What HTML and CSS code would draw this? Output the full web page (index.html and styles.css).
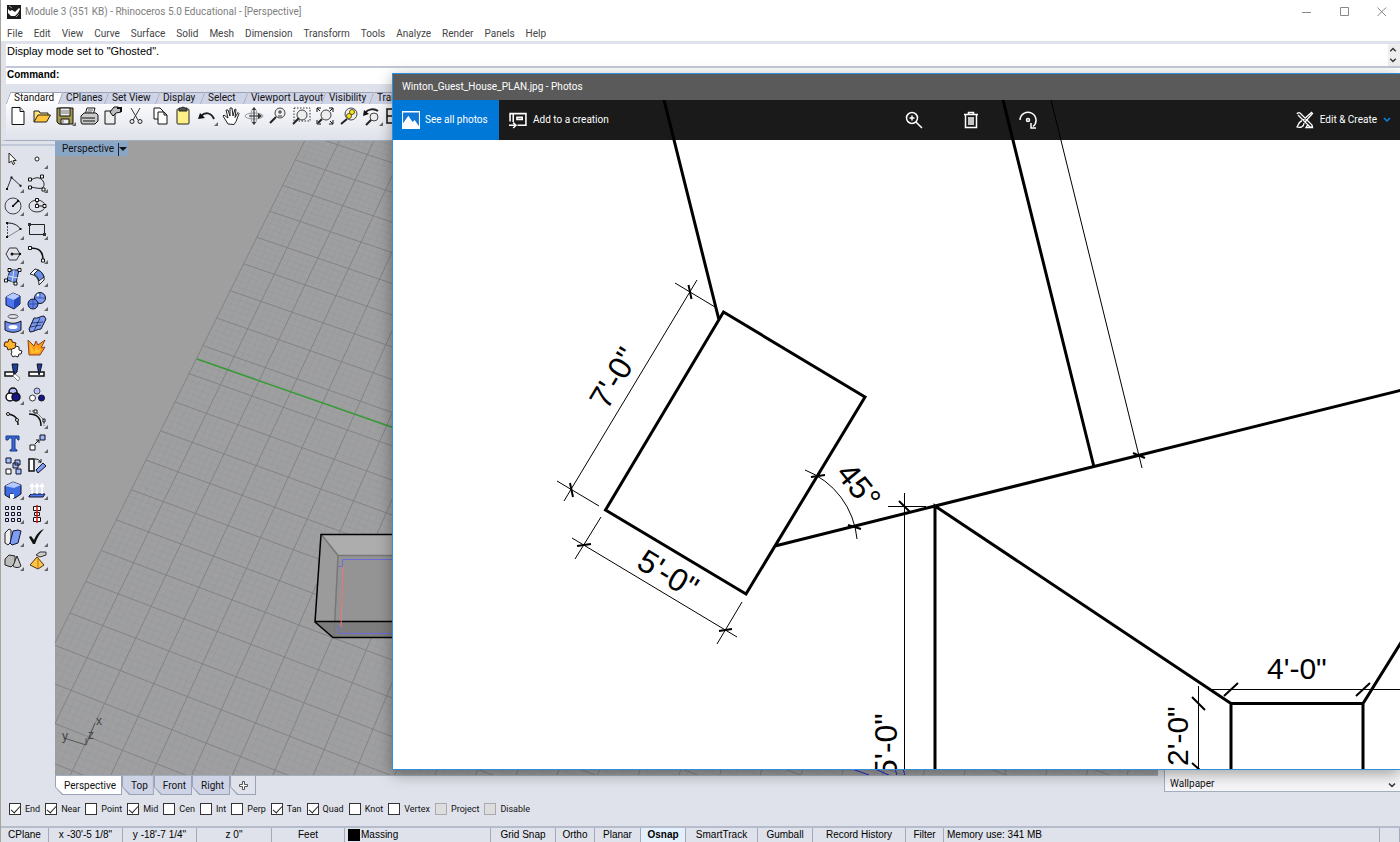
FILE: index.html
```html
<!DOCTYPE html>
<html lang="en">
<head>
<meta charset="utf-8">
<title>Module 3 - Rhinoceros 5.0 Educational</title>
<link rel="stylesheet" href="styles.css">
</head>
<body>
<div class="app">
  <header class="titlebar">
    <svg class="app-icon" viewBox="0 0 14 14"><rect width="14" height="14" fill="#1c1c1c"/><path d="M1 4l2 2 2-1 3 2 4-4 1 1-2 4-3 3-4 0-3-3z" fill="#fff"/><path d="M2 1l3 2M9 12l3-3" stroke="#999"/></svg>
    <h1 class="title">Module 3 (351 KB) - Rhinoceros 5.0 Educational - [Perspective]</h1>
    <div class="win-buttons">
      <button aria-label="Minimize"><svg viewBox="0 0 10 10"><path d="M0 5.500h9"/></svg></button>
      <button aria-label="Maximize"><svg viewBox="0 0 10 10"><path d="M.5.5h8v8h-8z"/></svg></button>
      <button aria-label="Close"><svg viewBox="0 0 10 10"><path d="M.5.5l8.500 8.500M9 .5L.5 9"/></svg></button>
    </div>
  </header>
  <nav class="menubar">
    <button>File</button><button>Edit</button><button>View</button><button>Curve</button><button>Surface</button><button>Solid</button><button>Mesh</button><button>Dimension</button><button>Transform</button><button>Tools</button><button>Analyze</button><button>Render</button><button>Panels</button><button>Help</button>
  </nav>
  <section class="command">
    <div class="history"><p>Display mode set to "Ghosted".</p>
      <div class="scroll"><svg viewBox="0 0 10 24"><path d="M2 8l3-3 3 3M2 16l3 3 3-3"/></svg></div>
    </div>
    <div class="prompt"><label for="cmd">Command:</label><input id="cmd" type="text"></div>
  </section>
  <section class="toolbar">
    <div class="tabs">
      <button class="tab on t52">Standard</button><button class="tab t46">CPlanes</button><button class="tab t51">Set View</button><button class="tab t45">Display</button><button class="tab t43">Select</button><button class="tab t78">Viewport Layout</button><button class="tab t48">Visibility</button><button class="tab t52">Transform</button>
    </div>
    <div class="icons">
      <button class="tool" aria-label="New"><svg viewBox="-11 -10 22 20"><path d="M-6-8.500h8l4 4v13h-12z" fill="#fff" stroke="#111"/><path d="M2-8.500v4h4" fill="#ddd" stroke="#111"/></svg></button>
      <button class="tool" aria-label="Open"><svg viewBox="-11 -10 22 20"><path d="M-8 6v-11h5l1 2h8v3" fill="#ffe27a" stroke="#222"/><path d="M-8 6l4-7h12.500l-4 7z" fill="#ffc63b" stroke="#222"/></svg></button>
      <button class="tool more" aria-label="Save"><svg viewBox="-11 -10 22 20"><path d="M-8-8h16v16h-14l-2-2z" fill="#a5974c" stroke="#111"/><path d="M-5-8h10v8h-10zM-4 3h8v5h-8z" fill="#eee" stroke="#111"/><path d="M-4-5h8M-4-3h8M-2 3v5" stroke="#777"/></svg></button>
      <button class="tool" aria-label="Print"><svg viewBox="-11 -10 22 20"><path d="M-4-1l2-7h8l-2 7" fill="#fff" stroke="#111"/><path d="M-1-6h5M-2-4h5" stroke="#555"/><path d="M-8 0l3-3h12l2 2v6l-3 3h-13l-1-2z" fill="#ccc" stroke="#111"/><path d="M-7 2h13M-6 5h12" stroke="#111"/></svg></button>
      <button class="tool" aria-label="Properties"><svg viewBox="-11 -10 22 20"><path d="M-8-5h10v13h-10z" fill="#eee" stroke="#111"/><path d="M-3-4l4-5 4 0 3 2v3l-5 1-3 3z" fill="#bbb" stroke="#111"/><path d="M4-8h4v4" stroke="#111" stroke-width="2" fill="none"/></svg></button>
      <button class="tool" aria-label="Cut"><svg viewBox="-11 -10 22 20"><path d="M-5-8l7 12M4-8l-7 12" stroke="#333" fill="none"/><circle cx="-4" cy="5.500" r="2" fill="none" stroke="#222"/><circle cx="4" cy="5.500" r="2" fill="none" stroke="#222"/></svg></button>
      <button class="tool" aria-label="Copy"><svg viewBox="-11 -10 22 20"><path d="M-6-8h6l3 3v8h-9z" fill="#fff" stroke="#111"/><path d="M-2-4h6l3 3v9h-9z" fill="#fff" stroke="#111"/><path d="M4-4v3h3" fill="none" stroke="#111"/></svg></button>
      <button class="tool" aria-label="Paste"><svg viewBox="-11 -10 22 20"><rect x="-6" y="-7" width="12" height="15" rx="1" fill="#fff088" stroke="#222"/><path d="M-4-5v-3h2l2-1 2 1h2v3z" fill="#555" stroke="#222"/></svg></button>
      <button class="tool more" aria-label="Undo"><svg viewBox="-11 -10 22 20"><path d="M-6 0c4-4 10-4 13 3" fill="none" stroke="#222" stroke-width="2"/><path d="M-9 3l2-6 5 5z" fill="#111"/></svg></button>
      <button class="tool" aria-label="Pan"><svg viewBox="-11 -10 22 20"><path d="M-3 8l-5-8 1-1 4 3-2-8 2 0 2 6 0-8h2l1 8 2-7 1 .5-1 8 3-5 1 1-3 8-2 3z" fill="#fff" stroke="#222"/></svg></button>
      <button class="tool" aria-label="Rotate view"><svg viewBox="-11 -10 22 20"><ellipse rx="9" ry="3" fill="none" stroke="#999"/><ellipse rx="3" ry="8" fill="none" stroke="#999"/><path d="M0-7v13M-5 0h10" stroke="#222"/><path d="M-2-6l2-3 2 3zM-2 6l2 3 2-3zM4-3l4 3-4 3z" fill="#333"/></svg></button>
      <button class="tool" aria-label="Zoom dynamic"><svg viewBox="-11 -10 22 20"><circle cx="2" cy="-3" r="5" fill="#eee" stroke="#444"/><path d="M-2 1l-6 6" stroke="#222" stroke-width="2"/><path d="M0-4h4M2-6v4M0 0h4" stroke="#333"/></svg></button>
      <button class="tool" aria-label="Zoom window"><svg viewBox="-11 -10 22 20"><path d="M-8-8h16v13h-16z" fill="none" stroke="#333" stroke-dasharray="1.500 1.500"/><circle cx="0" cy="-1" r="5" fill="#eee" stroke="#444"/><path d="M-3 2l-6 6" stroke="#222" stroke-width="2"/></svg></button>
      <button class="tool" aria-label="Zoom extents"><svg viewBox="-11 -10 22 20"><circle cx="1" cy="-1" r="5" fill="#eee" stroke="#444"/><path d="M-3 3l-4 4" stroke="#222" stroke-width="2"/><path d="M-8-4v-4h4M8-4v-4h-4M-8 4v4h4M8 4v4h-4M-8-8l3 3M8-8l-3 3M8 8l-3-3" fill="none" stroke="#111"/></svg></button>
      <button class="tool" aria-label="Zoom selected"><svg viewBox="-11 -10 22 20"><circle cx="2" cy="-2" r="6" fill="#eee" stroke="#444"/><path d="M-2 3l-6 5" stroke="#222" stroke-width="2"/><circle cx="0" cy="0" r="2.500" fill="#ffe600" stroke="#554"/><circle cx="3" cy="-4" r="2.500" fill="#ffe600" stroke="#554"/></svg></button>
      <button class="tool more" aria-label="Undo view"><svg viewBox="-11 -10 22 20"><path d="M-7-3c3-4 9-5 13-2" fill="none" stroke="#222" stroke-width="2"/><path d="M-9 0l1-6 5 4z" fill="#111"/><circle cx="2" cy="1" r="4" fill="#eee" stroke="#444"/><path d="M-1 4l-5 5" stroke="#222" stroke-width="2"/></svg></button>
      <button class="tool" aria-label="Four views"><svg viewBox="-11 -10 22 20"><path d="M-9-7h16v14h-16zM-9 0h16M-1-7v14" fill="#eee" stroke="#111" stroke-width="1.500"/></svg></button>
    </div>
  </section>
  <main class="workspace">
    <aside class="toolbox">
      <button class="tool" aria-label="Select"><svg viewBox="-11 -10 22 20"><path d="M-4-6v10l2.500-2 1.500 3.500 1.700-.8-1.500-3.200h3z" fill="#fff" stroke="#222"/></svg></button>
      <button class="tool more" aria-label="Point"><svg viewBox="-11 -10 22 20"><circle r="2" fill="#fff" stroke="#222"/></svg></button>
      <button class="tool more" aria-label="Polyline"><svg viewBox="-11 -10 22 20"><path d="M-6 6l4.500-11.500 9 8.200" fill="none" stroke="#333"/><path d="M-7 5h2v2h-2zM-2.500-6.500h2v2h-2zM6.500 1.700h2v2h-2z" fill="#111"/></svg></button>
      <button class="tool more" aria-label="Curve"><svg viewBox="-11 -10 22 20"><path d="M-6-3c6-4 10-2 12 1s1 6-1 7-6 0-11-1" fill="none" stroke="#222"/><path d="M-8.500-5h3v3h-3zM3.500-8h3v3h-3zM-8.500 3h3v3h-3zM5 5h3v3h-3z" fill="#fff" stroke="#111"/></svg></button>
      <button class="tool more" aria-label="Circle"><svg viewBox="-11 -10 22 20"><circle r="8" fill="none" stroke="#444"/><path d="M0 0l5-5" stroke="#111" stroke-width="1.500"/><path d="M-1-1h2v2h-2zM4-6h2v2h-2z" fill="#111"/></svg></button>
      <button class="tool more" aria-label="Ellipse"><svg viewBox="-11 -10 22 20"><ellipse rx="8" ry="6" fill="none" stroke="#333"/><path d="M-1.500-7.500h3v3h-3zM-1.500-1.500h3v3h-3zM6-1.500h3v3h-3z" fill="#fff" stroke="#111"/><path d="M0-4v2M2 0h4" stroke="#111"/></svg></button>
      <button class="tool more" aria-label="Arc"><svg viewBox="-11 -10 22 20"><path d="M-5.500 7v-14" stroke="#555" stroke-dasharray="2 1"/><path d="M-5.500 7l13-8" stroke="#888"/><path d="M-5.500-7c6 0 10 2 13 6" fill="none" stroke="#111"/><path d="M-7-8h2v2h-2zM-7 6h2v2h-2zM6.500-2h2v2h-2z" fill="#111"/></svg></button>
      <button class="tool more" aria-label="Rectangle"><svg viewBox="-11 -10 22 20"><path d="M-7.500-5.500h15v10h-15z" fill="none" stroke="#222"/><path d="M-9-7h3v3h-3zM6 3h3v3h-3z" fill="#333"/></svg></button>
      <button class="tool more" aria-label="Polygon"><svg viewBox="-11 -10 22 20"><path d="M-7 0l3.500-6h7l3.500 6-3.500 6h-7z" fill="none" stroke="#333"/><path d="M-1 0h8" stroke="#111"/><circle cx="-1" r="1.500" fill="#111"/><circle cx="7" r="1.200" fill="#111"/></svg></button>
      <button class="tool more" aria-label="Fillet curve"><svg viewBox="-11 -10 22 20"><path d="M-7-6c9 0 13 3 13 12" fill="none" stroke="#111" stroke-width="1.500"/><path d="M-8.500-7.500h3v3h-3zM4.500 5h3v3h-3z" fill="#fff" stroke="#111"/></svg></button>
      <button class="tool more" aria-label="Surface from points"><svg viewBox="-11 -10 22 20"><path d="M-3-7h9l-3 13-9-3z" fill="#6f8fe8" stroke="#123"/><path d="M1-7l-2 12M-5-1l10 2" stroke="#cde"/><path d="M-5-8.500h3v3h-3zM5-8.500h3v3h-3zM-8.500 2h3v3h-3zM1 5h3v3h-3z" fill="#fff" stroke="#111"/></svg></button>
      <button class="tool more" aria-label="Sweep"><svg viewBox="-11 -10 22 20"><path d="M-7-3l5-5c6 1 10 6 9 11l-5 5c0-6-3-10-9-11z" fill="#fff" stroke="#222"/><path d="M-3-3l4-4c3 1 5 4 6 7l-5 4c-1-3-2-5-5-7z" fill="#6f8fe8" stroke="#123"/></svg></button>
      <button class="tool more" aria-label="Box"><svg viewBox="-11 -10 22 20"><path d="M-7-4l7-4 7 3v8l-6 5-8-4z" fill="#4a76f0" stroke="#113"/><path d="M-7-4l7-4 7 3-6 4z" fill="#b5c8ff"/><path d="M1-1l6-4v8l-6 5z" fill="#2748b8"/></svg></button>
      <button class="tool more" aria-label="Boolean union"><svg viewBox="-11 -10 22 20"><circle cx="3" cy="-3" r="5.500" fill="#7d9df2" stroke="#112"/><circle cx="-4" cy="3" r="5" fill="#5f82ea" stroke="#112"/><path d="M-2-3h10M3-8v5M-9 3h10M-4-2v10" stroke="#2a3f8c" stroke-width=".7"/><circle cx="1" cy="-6" r="1.200" fill="#dff"/></svg></button>
      <button class="tool more" aria-label="Project curve"><svg viewBox="-11 -10 22 20"><ellipse cy="-7.500" rx="5" ry="2" fill="none" stroke="#555"/><path d="M-8-3c5 3 11 3 16 0v9c-5 3-11 3-16 0z" fill="#6f8fe8" stroke="#112"/><ellipse cy="3" rx="4.500" ry="2" fill="#fff"/></svg></button>
      <button class="tool more" aria-label="Patch"><svg viewBox="-11 -10 22 20"><path d="M-3-6c4 1 6-2 10-2l2 3-5 10c-4 0-7 3-11 3l-1-3z" fill="#7d9df2" stroke="#112"/><path d="M3-6l-6 13M-5-1l11-1M-7 3l11-2" stroke="#113" stroke-width=".7"/></svg></button>
      <button class="tool" aria-label="Join"><svg viewBox="-11 -10 22 20"><path d="M-8-6h3l1-3 3 1 0 2 4 1-1 3 2 1-3 3-4-1-2 1-1-3-3-1z" fill="#ffb52e" stroke="#421"/><path d="M-1 1l3-1 1-2 3 1v3l3 1-1 3-2 0-1 3-3-1-2 1-2-3 1-2-1-2z" fill="#fff" stroke="#222"/></svg></button>
      <button class="tool" aria-label="Explode"><svg viewBox="-11 -10 22 20"><path d="M-9-8l6 6 2-5 2 4 7-5-4 8 4-1-5 8h-11z" fill="#ff9a1a" stroke="#842"/><path d="M-7-5l4 9 3-6 1 5 4-4-3 6h-8z" fill="#ffc02e"/></svg></button>
      <button class="tool" aria-label="Trim"><svg viewBox="-11 -10 22 20"><path d="M-1-8h6l-1 8-3 3z" fill="#1f3f9a" stroke="#112"/><path d="M-8 0h9v4h-9z" fill="#fff" stroke="#111" stroke-width="1.500"/><path d="M2 2l5 4-2 3-5-5z" fill="#fff" stroke="#888"/></svg></button>
      <button class="tool" aria-label="Split"><svg viewBox="-11 -10 22 20"><path d="M-8 0h15v4h-15z" fill="#fff" stroke="#111" stroke-width="1.500"/><path d="M0-8h5l-2 8-1 3z" fill="#1f3f9a" stroke="#112"/></svg></button>
      <button class="tool more" aria-label="Group"><svg viewBox="-11 -10 22 20"><circle cy="-3" r="4" fill="#b9c0ff" stroke="#111" stroke-width="1.500"/><circle cx="-3" cy="2" r="4" fill="#fff" stroke="#111" stroke-width="1.500"/><circle cx="3" cy="2" r="4" fill="#16168c" stroke="#111" stroke-width="1.500"/></svg></button>
      <button class="tool" aria-label="Ungroup"><svg viewBox="-11 -10 22 20"><circle cy="-4" r="3" fill="#b9c0ff" stroke="#444"/><circle cx="-4.500" cy="3" r="3" fill="#fff" stroke="#333"/><circle cx="4.500" cy="3" r="3" fill="#16168c" stroke="#112"/></svg></button>
      <button class="tool" aria-label="Edit points"><svg viewBox="-11 -10 22 20"><path d="M-7-5c8 0 12 4 12 11" fill="none" stroke="#111" stroke-width="1.500"/><circle cx="-5" cy="-5" r="1.500" fill="#fff" stroke="#111"/><circle cx="4" cy="1" r="1.500" fill="#fff" stroke="#111"/></svg></button>
      <button class="tool more" aria-label="Control points"><svg viewBox="-11 -10 22 20"><path d="M-8-5c8 0 12 4 12 12" fill="none" stroke="#111" stroke-width="1.500"/><path d="M-8-8h6M-2-8l9 9v6" fill="none" stroke="#555" stroke-dasharray="2 1"/><path d="M-3-9h3v3h-3zM6 0h2v3h-2z" fill="#fff" stroke="#111"/></svg></button>
      <button class="tool" aria-label="Text"><svg viewBox="-11 -10 22 20"><path d="M-7-7h13v4h-1l-1-2h-2v11l2 1v1h-7v-1l2-1v-11h-3l-1 2h-2z" fill="#3e68d8" stroke="#123a8c"/></svg></button>
      <button class="tool more" aria-label="Move"><svg viewBox="-11 -10 22 20"><path d="M3-8h5v5h-5z" fill="#9db4f5" stroke="#112"/><path d="M-7 2h5v5h-5z" fill="#fff" stroke="#111"/><path d="M-2 1l4-4M-1-3h3v3" fill="none" stroke="#111"/></svg></button>
      <button class="tool" aria-label="Copy objects"><svg viewBox="-11 -10 22 20"><path d="M-7-8h5v5h-5zM0-3h5v5h-5zM2-6h5v5h-5zM3 3h5v5h-5z" fill="#a5bcff" stroke="#112"/><path d="M-7 3h5v5h-5z" fill="#fff" stroke="#111"/></svg></button>
      <button class="tool" aria-label="Rotate"><svg viewBox="-11 -10 22 20"><path d="M-8-7h5v12h-5z" fill="#fff" stroke="#111" stroke-width="1.500"/><path d="M-1 4l7-7 3 3-8 7z" fill="#7d9df2" stroke="#112"/><path d="M-2-7c3 0 5 1 6 4M1-4h3v-3" fill="none" stroke="#222"/></svg></button>
      <button class="tool more" aria-label="Solid edit"><svg viewBox="-11 -10 22 20"><path d="M-8-4l8-4 8 3v9l-6 4h-2v-4h-3v4l-5-3z" fill="#3f6ce0" stroke="#112"/><path d="M-8-4l8-4 8 3-7 3z" fill="#b5c8ff"/><path d="M-3 4h4v4h-4z" fill="#fff"/></svg></button>
      <button class="tool more" aria-label="Extrude"><svg viewBox="-11 -10 22 20"><path d="M-8 6l2-2h14l-2 3h-14z" fill="#4a76f0" stroke="#113"/><path d="M-5 4v-9M0 4v-9M5 4v-9M-7-3l2-3 2 3M-2-3l2-3 2 3M3-3l2-3 2 3" fill="none" stroke="#fff" stroke-width="1.500"/></svg></button>
      <button class="tool more" aria-label="Array"><svg viewBox="-11 -10 22 20"><path d="M-7.500-7.500h3v3h-3zM-1.500-7.500h3v3h-3zM4.500-7.500h3v3h-3zM-7.500-1.500h3v3h-3zM-1.500-1.500h3v3h-3zM4.500-1.500h3v3h-3zM-7.500 4.500h3v3h-3zM-1.500 4.500h3v3h-3zM4.500 4.500h3v3h-3z" fill="#dfe6ff" stroke="#112"/></svg></button>
      <button class="tool more" aria-label="Align"><svg viewBox="-11 -10 22 20"><path d="M-3.500-7.500h7v4h-7zM-2.500-1.500h5v3h-5zM-3.500 3.500h7v4h-7z" fill="#fff" stroke="#111"/><path d="M0-9v18" stroke="#d11" stroke-width="1.500"/></svg></button>
      <button class="tool more" aria-label="Shear"><svg viewBox="-11 -10 22 20"><path d="M-8-4l4-4 2 1v12l-3 3-3-2z" fill="#eee" stroke="#222"/><path d="M0-6l5-1 3 1-3 12-6 2-2-2z" fill="#7d9df2" stroke="#113"/></svg></button>
      <button class="tool more" aria-label="Check"><svg viewBox="-11 -10 22 20"><path d="M-8 0l2-1 3 4c2-5 5-9 10-11-4 4-7 9-9 15h-2z" fill="#111"/></svg></button>
      <button class="tool more" aria-label="Meshes"><svg viewBox="-11 -10 22 20"><path d="M-8-2l4-4 6 1 0 7-4 4-6-2z" fill="#bbb" stroke="#222"/><path d="M4-5l4 10c-2 2-6 2-8 0z" fill="#ccc" stroke="#222"/></svg></button>
      <button class="tool more" aria-label="Render"><svg viewBox="-11 -10 22 20"><path d="M-7 4l7-8 7 8-6 4z" fill="#ffc44a" stroke="#531"/><path d="M1-4v11" stroke="#b70"/><path d="M-1-6l4-3h6v3l-6 2z" fill="#ccc" stroke="#333"/></svg></button>
    </aside>
    <section class="center">
      <div class="viewport">
        <svg class="scene" aria-label="Perspective view"><g transform="translate(-55 -141)">
          <path id="minor" class="minor"/><path id="major" class="major"/>
          <path d="M197 359L400 430" stroke="#359a35" stroke-width="1.500"/>
          <path d="M321 534H400V556H338z" fill="#adadad"/><path d="M321 534l17 21-4 82-19-15z" fill="#9b9b9b"/><path d="M338 556H400V622H335z" fill="#949494"/><path d="M315 622H400V638H333z" fill="#7d7d7d"/>
          <path d="M321 534l17 21.500M400 555.500H338l-4 81.500" class="edge"/>
          <path d="M400 534.500H321l-6 87.500 18 15.500H400M315 621.500H400" class="outline"/>
          <path d="M400 559.500H342.500v7h-4M335 626.500h3.500v7H400" fill="none" stroke="#6b6bd8"/>
          <path d="M343 566l-2 61" stroke="#e77"/>
          <path d="M852 769l17 6M875 769l16 7M895 768l2 8M903 768l2 8" stroke="#22d"/>
          <path d="M95 723l-9 22-22-7M86 745v-7" fill="none" stroke="#555"/>
          <text x="96" y="725" class="axis">x</text><text x="62" y="740" class="axis">y</text><text x="88" y="739" class="axis">z</text>
        </g></svg>
        <button class="view-label">Perspective<i></i></button>
      </div>
      <div class="view-tabs">
        <button class="vt on">Perspective</button><button class="vt">Top</button><button class="vt">Front</button><button class="vt">Right</button><button class="vt plus" aria-label="Add"><svg viewBox="0 0 10 10"><path d="M3.500.5h2v3h3v2h-3v3h-2v-3h-3v-2h3z" fill="#fff" stroke="#555"/></svg></button>
      </div>
    </section>
    <aside class="side"><span>Wallpaper</span><svg viewBox="0 0 8 8"><path d="M1 2l3 3 3-3"/></svg></aside>
  </main>
  <section class="osnap">
    <label><input type="checkbox" checked>End</label><label><input type="checkbox" checked>Near</label><label><input type="checkbox">Point</label><label><input type="checkbox" checked>Mid</label><label><input type="checkbox">Cen</label><label><input type="checkbox">Int</label><label><input type="checkbox">Perp</label><label><input type="checkbox" checked>Tan</label><label><input type="checkbox" checked>Quad</label><label><input type="checkbox">Knot</label><label><input type="checkbox">Vertex</label><label><input type="checkbox" class="off">Project</label><label><input type="checkbox" class="off">Disable</label>
  </section>
  <footer class="status">
    <button>CPlane</button><span>x -30'-5 1/8"</span><span>y -18'-7 1/4"</span><span>z 0"</span><span>Feet</span><button class="layer"><i></i>Massing</button><button>Grid Snap</button><button>Ortho</button><button>Planar</button><button class="on">Osnap</button><button>SmartTrack</button><button>Gumball</button><button>Record History</button><button>Filter</button><span class="mem">Memory use: 341 MB</span><span></span>
  </footer>
</div>

<section class="photos">
  <header class="photos-title">Winton_Guest_House_PLAN.jpg - Photos</header>
  <div class="photos-body">
    <div class="photos-bar">
      <button class="see"><svg viewBox="0 0 17 17"><path d="M0 0h17v17H0z" fill="#fff"/><path d="M1 1.500h15v13l-4-6-2 2-4-6-5 7z" fill="#0f78d7"/><path d="M1 14l5-7 5 7z" fill="#fff"/></svg>See all photos</button>
      <button class="add"><svg viewBox="0 0 17 17" fill="none" stroke="#fff" stroke-width="1.500"><path d="M1 10V2.500h15v11H8M4 2.500v8M7.500 6h5v2h-5zM0 13.500h6M4 11l2.500 2.500L4 16"/></svg>Add to a creation</button>
      <div class="photo-tools">
        <button aria-label="Zoom in"><svg viewBox="0 0 18 18" fill="none" stroke="#fff" stroke-width="1.500"><circle cx="7" cy="7" r="5.500"/><path d="M11 11l6 6M4.500 7h5M7 4.500v5"/></svg></button>
        <button aria-label="Delete"><svg viewBox="0 0 18 18" fill="none" stroke="#fff" stroke-width="1.500"><path d="M2 3.500h14M6.500 3V1.500h5V3M3.500 4v12.500h11V4M7 6v8M9 6v8M11 6v8"/></svg></button>
        <button aria-label="Rotate"><svg viewBox="0 0 18 18" fill="none" stroke="#fff" stroke-width="1.500"><path d="M1 9a8 8 0 1 1 13 6.500M12 12v5h5"/><circle cx="9" cy="9" r="1.500"/></svg></button>
      </div>
      <button class="edit"><svg viewBox="0 0 18 18" fill="none" stroke="#fff" stroke-width="1.300"><path d="M1 3a2 2 0 0 1 3-1l12 12 .5 2.500-2.500-.5L2 4M15.500 1.500l1 1-7.500 8.500-2-2zM6 10c-3 0-3 3-5 6 3 1 7 0 7-4M11.500 14l-1.500 2.500h7"/></svg>Edit &amp; Create<svg class="chev" viewBox="0 0 8 8"><path d="M1 2l3 3 3-3" fill="none" stroke="#0a84e8" stroke-width="1.500"/></svg></button>
    </div>
    <svg class="plan" aria-label="Guest house plan"><g transform="translate(-393 -100)">
      <path class="wall" d="M664 100L719 320M723.500 312L865 397L746 594L605.500 510zM775 546L935 506L1410 388M1003 100L1094 467M935 780V506L1231 703.500H1363L1410 628M1231 703V780M1363 703V780"/>
      <path class="thin" d="M1051 100L1142 468M697 280L564 501M675 283L715 307M557 481L599 506M572 538L737 637M601 517L575 559M742 602L717 644M805 470A82 82 0 0 1 857 539M904.500 493V780M888 506.500H926M1212 689.500H1410M1198.500 686V780"/>
      <path class="tick" d="M688.500 285l3 14M570 483l3 14M577 546l14-2M719 631l13-2M811 477l14-2M848 525l13 4M899 501l11 11M1133 453l12 5M1224 696l14-13M1356 696l14-13M1192 697l13 13M1192 763l8 7"/>
      <text transform="translate(607 411) rotate(-59)">7'-0"</text>
      <text transform="translate(635 567) rotate(31)">5'-0"</text>
      <text transform="translate(835 474) rotate(51)">45°</text>
      <text transform="translate(897 777) rotate(-90)">5'-0"</text>
      <text class="small" transform="translate(1188 766) rotate(-90)">2'-0"</text>
      <text class="small" x="1267" y="679">4'-0"</text>
    </g></svg>
  </div>
</section>
<script src="grid.js"></script>
</body>
</html>
```
FILE: styles.css
```css
* { box-sizing: border-box; }
body {
  margin: 0;
  height: 100vh;
  position: relative;
  overflow: hidden;
  background: #dfe2ea;
  color: #111;
  font: 10px/14px Roboto, "Open Sans", sans-serif;
}
button { border: 0; padding: 0; background: none; font: inherit; color: inherit; white-space: nowrap; }
svg { display: block; }
p, h1 { margin: 0; font: inherit; }

.app { height: 100%; display: flex; flex-direction: column; border-left: 1px solid #a7a499; }
.titlebar { display: flex; align-items: center; height: 24px; padding-left: 6px; background: #fff; color: #808080; }
.app-icon { width: 14px; height: 14px; margin-right: 4px; }
.win-buttons { margin-left: auto; display: flex; }
.win-buttons button { width: 38px; height: 24px; display: grid; place-items: center; }
.win-buttons svg { width: 10px; height: 10px; fill: none; stroke: #888; }
.win-buttons button:last-child { width: 36px; }
.menubar { display: flex; gap: 11px; height: 17px; padding: 2px 0 0 6px; background: #fff; color: #444; }
.command { border-left: 5px solid #dfe2ea; border-top: 3px solid #dfe2ea; border-bottom: 5px solid #dfe2ea; background: #fff; font-family: "Liberation Sans", sans-serif; color: #000; }
.history { display: flex; justify-content: space-between; height: 24px; border-bottom: 2px solid #c3c8d8; padding-left: 1px; font-size: 11px; }
.scroll { width: 12px; background: #eee; }
.scroll svg { width: 10px; height: 22px; fill: none; stroke: #333; stroke-width: 1.5; }
.prompt { display: flex; height: 16px; padding-left: 1px; font-weight: bold; }
.prompt input { flex: 1; border: 0; padding: 0; background: none; outline: 0; font: inherit; }

.toolbar { height: 52px; padding: 3px 0 0 6px; border-left: 5px solid #dfe2ea; border-bottom: 1px solid #a3adbd; background: linear-gradient(#dfe2ea 14px, #fbfbfd 15px, #dfe2ea); }
.tabs { display: flex; height: 12px; margin-left: -4px; line-height: 12px; }
.tab { position: relative; height: 12px; text-align: left; padding-left: 6px; z-index: 0; }
.tab::before { content: ""; position: absolute; inset: 0; z-index: -1; background: #ced3e6; border: 1px solid #9aa2b6; border-width: 1px 0 0 1px; border-top-left-radius: 2px; transform: skewX(-20deg); }
.tab.on::before { background: #fff; }
.t43 { width: 43px; } .t45 { width: 45px; } .t46 { width: 46px; } .t48 { width: 48px; }
.t51 { width: 51px; } .t52 { width: 52px; } .t78 { width: 78px; }
.icons { display: flex; justify-content: space-between; width: 400px; margin: 2px 0 0 -5px; }
.tool { position: relative; width: 22px; height: 20px; }
.tool svg { width: 22px; height: 20px; fill: none; }
.tool.more::after { content: ""; position: absolute; right: 0; bottom: 0; border: 2px solid #666; border-left-color: transparent; border-top-color: transparent; }

.workspace { flex: 1; min-height: 0; display: flex; }
.toolbox { width: 54px; flex: none; display: grid; grid-template-columns: 22px 22px; column-gap: 2px; height: 430px; padding: 5px 0 0 1px; align-content: space-between; border-top: 3px solid #dfe2ea; box-shadow: inset 0 2px #c3c8d8; }
.center { flex: 1; min-width: 0; display: flex; flex-direction: column; }
.viewport { flex: 1; position: relative; background: #9f9f9f; border-bottom: 1px solid #a3adbd; }
.scene { position: absolute; inset: 0; width: 100%; height: 100%; overflow: hidden; }
.minor { fill: none; stroke: #8f96a3; stroke-width: .5; opacity: .8; }
.major { fill: none; stroke: #808389; }
.edge { fill: none; stroke: #777; stroke-width: 1.5; }
.outline { fill: none; stroke: #000; stroke-width: 1.5; }
.axis { font: 12px "Liberation Sans", sans-serif; fill: #444; }
.view-label { position: relative; display: flex; align-items: center; height: 15px; width: 73px; padding-left: 7px; background: #8aa6c6; }
.view-label i { margin-left: auto; margin-right: 1px; border: 4px solid transparent; border-top-color: #111; border-bottom: 0; position: relative; }
.view-label i::before { content: ""; position: absolute; left: -5px; top: -8px; height: 13px; border-left: 1px solid #223; }
.view-tabs { display: flex; height: 20px; flex: none; }
.vt { position: relative; z-index: 0; height: 19px; padding: 1px 6px 0 9px; }
.vt::before, .vt::after { content: ""; position: absolute; z-index: -2; inset: 0; background: #9aa2b6; clip-path: polygon(0 0, 100% 0, 100% 100%, 7px 100%, 0 11px); }
.vt::after { z-index: -1; background: #ced3e6; inset: 0 1px 1px 1px; }
.vt.on::after { background: #fff; }
.vt.plus { width: 26px; }
.vt.plus::after { background: #dfe2ea; }
.plus svg { width: 10px; height: 10px; }
.side { width: 236px; margin: 0 0 4px 6px; padding: 0 4px 0 5px; display: flex; align-items: flex-end; justify-content: space-between; border: 1px solid #a3adbd; border-right: 0; background: #f6f6f8; line-height: 15px; }
.side svg { width: 8px; height: 11px; fill: none; stroke: #333; stroke-width: 1.5; }

.osnap { display: flex; height: 30px; padding: 7px 0 0 8px; gap: 5px; font-size: 9px; line-height: 12px; }
.osnap label { display: flex; gap: 4px; height: 12px; white-space: nowrap; }
.osnap input { appearance: none; width: 12px; height: 12px; margin: 0; border: 1px solid #333; background: #fff; position: relative; }
.osnap input:checked::after { content: ""; position: absolute; left: 3px; top: 0; width: 4px; height: 8px; border: solid #222; border-width: 0 1px 1px 0; transform: rotate(42deg); }
.osnap input.off { border-color: #aaa; background: #ddd; }
.status { display: grid; grid-template-columns: 48px 74px 74px 75px 73px 146px 65px 39px 46px 45px 72px 55px 93px 38px 1fr 20px; height: 16px; border-top: 2px solid #b5bccb; font-family: "Liberation Sans", sans-serif; line-height: 14px; text-align: center; white-space: nowrap; color: #000; }
.status > * { border-right: 1px solid #a3a9b8; }
.status .on { font-weight: bold; background: #e3f1fd; }
.status .layer { display: flex; align-items: center; padding-left: 3px; gap: 1px; }
.layer i { width: 12px; height: 12px; background: #000; }
.status .mem { text-align: left; padding-left: 3px; }

.photos { position: absolute; left: 392px; right: 0; top: 73px; bottom: 72px; display: flex; flex-direction: column; border: 1px solid #2f8fdd; border-right: 0; background: #fff; box-shadow: 0 4px 14px rgba(0, 0, 0, .35); color: #fff; }
.photos-title { height: 26px; padding-left: 9px; background: #5a5a5a; line-height: 26px; }
.photos-body { flex: 1; position: relative; min-height: 0; }
.photos-bar { display: flex; height: 40px; background: #1a1a1a; }
.photos-bar button { position: relative; z-index: 1; display: flex; align-items: center; }
.photos-bar .see { gap: 5px; width: 106px; padding-left: 9px; background: #0078d7; }
.photos-bar svg { width: 18px; height: 18px; }
.photos-bar .add { gap: 6px; padding-left: 10px; padding-right: 38px; }
.photo-tools { flex: 1; display: flex; justify-content: center; gap: 39px; }
.photos-bar .edit { gap: 6px; padding-right: 9px; }
.photos-bar .chev { width: 8px; height: 8px; }
.plan { position: absolute; inset: 0; width: 100%; height: 100%; overflow: hidden; pointer-events: none; }
.plan path { fill: none; stroke: #000; }
.plan .wall { stroke-width: 3; }
.plan .thin { stroke-width: 1; }
.plan .tick { stroke-width: 2; }
.plan text { font: 32px "Liberation Sans", sans-serif; fill: #000; }
.plan .small { font-size: 30px; }
```
FILE: grid.js
```js
// Perspective mapping from construction-plane cells (column, row) to the screen.
const pairs = [
  [0, -7, 295.3, 160], [3, -7, 385.5, 190],
  [0, 9, 70, 613], [6, 9, 270, 689.7]
];

function solve(m) {
  const n = m.length;
  for (let i = 0; i < n; i++) {
    let p = i;
    for (let j = i + 1; j < n; j++) if (Math.abs(m[j][i]) > Math.abs(m[p][i])) p = j;
    [m[i], m[p]] = [m[p], m[i]];
    for (let j = 0; j < n; j++) {
      if (j === i) continue;
      const f = m[j][i] / m[i][i];
      for (let k = i; k <= n; k++) m[j][k] -= f * m[i][k];
    }
  }
  return m.map((row, i) => row[n] / row[i]);
}

const rows = [];
for (const [c, r, x, y] of pairs) {
  rows.push([c, r, 1, 0, 0, 0, -x * c, -x * r, x]);
  rows.push([0, 0, 0, c, r, 1, -y * c, -y * r, y]);
}
const h = solve(rows);
const point = (c, r) => {
  const w = h[6] * c + h[7] * r + 1;
  return ((h[0] * c + h[1] * r + h[2]) / w).toFixed(1) + " " + ((h[3] * c + h[4] * r + h[5]) / w).toFixed(1);
};
const line = (c1, r1, c2, r2) => "M" + point(c1, r1) + "L" + point(c2, r2);

let major = "";
let minor = "";
for (let i = 0; i <= 150; i++) {
  const d = line(i / 5, -10, i / 5, 20);
  if (i % 5) minor += d; else major += d;
}
for (let i = -50; i <= 100; i++) {
  const d = line(0, i / 5, 30, i / 5);
  if (i % 5) minor += d; else major += d;
}
document.getElementById("minor").setAttribute("d", minor);
document.getElementById("major").setAttribute("d", major);
```
